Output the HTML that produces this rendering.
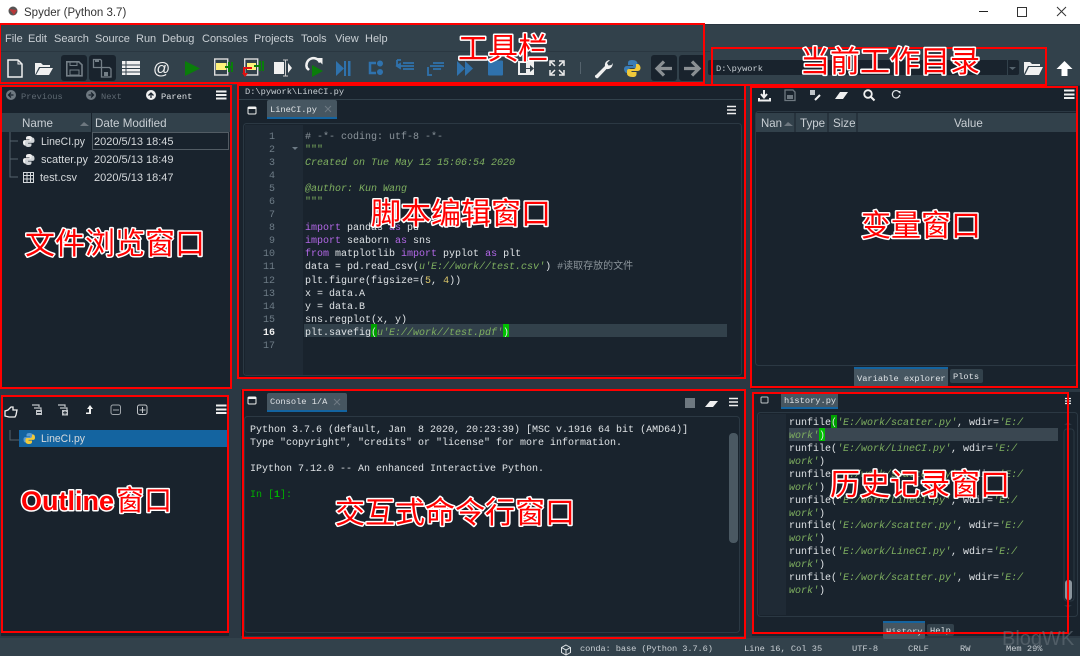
<!DOCTYPE html>
<html><head><meta charset="utf-8"><title>Spyder</title>
<style>
html,body{margin:0;padding:0;background:#19232D;width:1080px;height:656px;overflow:hidden}
svg{display:block;position:absolute;left:0;top:0}
text{white-space:pre}
.ui{font-family:"Liberation Sans",sans-serif;font-size:11px;fill:#c9cfd4}
.hd{font-size:11.6px}
.mn{font-family:"Liberation Mono","Noto Sans CJK SC",monospace;font-size:10px;fill:#dfe3e6}
.sm{font-family:"Liberation Mono","Noto Sans CJK SC",monospace;font-size:8.7px;fill:#c9cfd4}
.ln{font-family:"Liberation Mono",monospace;font-size:10px;fill:#6d7b86;text-anchor:end}
.kw{fill:#b267e6}.st{fill:#7fb060;font-style:italic}.cm{fill:#8b949b}.nu{fill:#dcc66a}
.lb{font-family:"Liberation Sans","Noto Sans CJK SC",sans-serif;font-size:30px;font-weight:400;fill:#f00;stroke:#fff;stroke-width:3px;paint-order:stroke;stroke-linejoin:round}
.box{fill:none;stroke:#f00;stroke-width:2}
.bl{fill:#2f72ad}
</style></head><body>
<svg width="1080" height="656" viewBox="0 0 1080 656" xmlns="http://www.w3.org/2000/svg">
<!-- title bar -->
<rect width="1080" height="25" fill="#fff"/>
<rect y="24" width="1080" height="1" fill="#2a3540"/>
<circle cx="13" cy="11" r="4.5" fill="#555"/><path d="M9 9l8 1-3 5z" fill="#b8383a"/>
<text x="24" y="16" font-family="Liberation Sans" font-size="11.5" fill="#333">Spyder (Python 3.7)</text>
<rect x="979" y="11" width="9" height="1" fill="#222"/>
<rect x="1017.500" y="7.500" width="9" height="9" fill="none" stroke="#333"/>
<path d="M1057 7l9 9M1066 7l-9 9" stroke="#333" stroke-width="1" fill="none"/>
<!-- menu + toolbar -->
<rect y="25" width="1080" height="60" fill="#32414B"/>
<rect y="51" width="710" height="1" fill="#2a3741"/>
<g class="ui">
<text x="5" y="42">File</text><text x="28" y="42">Edit</text><text x="54" y="42">Search</text><text x="95" y="42">Source</text><text x="136" y="42">Run</text><text x="162" y="42">Debug</text><text x="202" y="42">Consoles</text><text x="254" y="42">Projects</text><text x="301" y="42">Tools</text><text x="335" y="42">View</text><text x="365" y="42">Help</text>
</g>
<!-- toolbar icons -->
<path d="M8 60h10l4 4v13H8z" fill="none" stroke="#f0f0f0" stroke-width="1.500"/><path d="M18 60v4h4" fill="none" stroke="#f0f0f0"/>
<path d="M35 63h6l2 2h7v2H39l-4 8zM36 75l4-7h13l-4 7z" fill="#f0f0f0"/>
<rect x="61" y="55" width="26" height="26" rx="3" fill="#19232D"/><rect x="89" y="55" width="27" height="26" rx="3" fill="#19232D"/>
<path d="M66.800 61.800h12l3.200 3v11h-15.200z" fill="none" stroke="#747f87" stroke-width="1.600"/><rect x="70" y="62" width="7" height="3.500" fill="none" stroke="#747f87"/><rect x="70" y="70" width="9" height="5" fill="none" stroke="#747f87"/>
<path d="M93.500 59.500h7l1 1v7h-8zM101.500 67.500h8l1.500 1.500v8h-9.500z" fill="none" stroke="#747f87" stroke-width="1.300"/><rect x="95" y="60" width="4" height="2" fill="#747f87"/><rect x="104" y="72" width="4" height="4" fill="#747f87"/>
<path d="M122 61h18v14h-18z" fill="#f0f0f0"/><path d="M122 65h18M122 68.500h18M122 72h18M126 61v14" stroke="#32414B" stroke-width="1"/>
<text x="153" y="74" font-family="Liberation Sans" font-size="17" fill="#f0f0f0">@</text>
<path d="M185 61l15 7.500-15 7.500z" fill="#0a7d0a"/>
<rect x="214.700" y="59" width="13" height="16" fill="#32414B" stroke="#ddd" stroke-width="1.400"/><rect x="216" y="63" width="10.500" height="7" fill="#fff27a"/><path d="M225 67h7M229 62v10M232 62v10" stroke="#0a7d0a" stroke-width="2" fill="none"/>
<rect x="244.700" y="59" width="13" height="16" fill="#32414B" stroke="#ddd" stroke-width="1.400"/><rect x="247" y="63" width="9" height="7" fill="#fff27a"/><path d="M254 66h6M260 61v10M263 61v10" stroke="#0a7d0a" stroke-width="2" fill="none"/><path d="M252 68h-8v6" stroke="#e01010" stroke-width="2" fill="none"/><path d="M242 73h6l-3 4z" fill="#e01010"/>
<rect x="274" y="62" width="10" height="12" fill="#f0f0f0"/><path d="M283 60h5M283 76h5M285.500 60v16" stroke="#ccc" fill="none"/><path d="M288 63l4 5-4 5z" fill="#f0f0f0"/>
<path d="M320 62.500a7 7 0 1 0-13 5.500l2 2" fill="none" stroke="#f0f0f0" stroke-width="2.500"/><path d="M316 58h6.500v6.500z" fill="#f0f0f0"/><path d="M312 65l11 6-11 6z" fill="#0a7d0a"/>
<path class="bl" d="M336 61l8 7.500-8 7.500zM344 61h2v15h-2zM348 61h2.500v15H348z"/>
<path d="M376 63h-6v10h6" fill="none" stroke="#2f72ad" stroke-width="2.500"/><circle class="bl" cx="380" cy="63.500" r="3"/><circle class="bl" cx="380" cy="72" r="3"/>
<path d="M397 60h4M397 60v6M400 66h14M403 63h11M403 69h11M397 66l3-2v4z" stroke="#2f72ad" stroke-width="1.800" fill="none"/>
<path d="M430 66h14M433 63h11M433 69h8M428 67v8h4" stroke="#2f72ad" stroke-width="1.800" fill="none"/>
<path class="bl" d="M457 61l8 7.500-8 7.500zM465 61l8 7.500-8 7.500z"/>
<rect class="bl" x="488" y="60.500" width="15" height="15" rx="1"/>
<rect x="518" y="61" width="16" height="14" fill="#eee"/><path d="M520 63h6v10h-6z" fill="#32414B"/><path d="M526 68h4v-3l4 3.500-4 3.500v-3h-4z" fill="#32414B"/>
<path d="M550 66v-5h5M559 61h5v5M550 70v5h5M559 75h5v-5M551 62l4 4M563 62l-4 4M551 74l4-4M563 74l-4-4" fill="none" stroke="#eee" stroke-width="1.500"/>
<rect x="580" y="62" width="1" height="12" fill="#55636d"/>
<path d="M596 75l9-9a5 5 0 0 1 5-6l-3 3 1.500 2.500 3-.5 1-2a5 5 0 0 1-6 6l-8 8.500a1.800 1.800 0 0 1-3-2.500z" fill="#f0f0f0"/>
<path d="M632 60c-4 0-4 2-4 3.500V65h5v1h-6c-2 0-3 1.500-3 3s1 4 3 4h1.500v-2c0-2 1-3 3-3h4c1.500 0 2-1 2-2v-2.500c0-2-2-3.500-5.500-3.500z" fill="#3a7cb5"/>
<path d="M632.500 77c4 0 4-2 4-3.500V72h-5v-1h6c2 0 3-1.500 3-3s-1-4-3-4h-1.500v2c0 2-1 3-3 3h-4c-1.500 0-2 1-2 2v2.500c0 2 2 3.500 5.500 3.500z" fill="#f0c93a"/>
<rect x="651" y="55" width="26" height="26" rx="3" fill="#19232D"/><rect x="679" y="55" width="26" height="26" rx="3" fill="#19232D"/>
<path d="M672 68.500h-14M664 61.500l-7 7 7 7" fill="none" stroke="#8a8f93" stroke-width="3.200"/>
<path d="M684 68.500h14M692 61.500l7 7-7 7" fill="none" stroke="#8a8f93" stroke-width="3.200"/>
<!-- cwd -->
<rect x="708" y="60" width="311" height="15" rx="2" fill="#19232D"/>
<rect x="1007" y="60" width="1" height="15" fill="#32414B"/><path d="M1009 67h7l-3.500 3z" fill="#55636d"/>
<text class="sm" x="716" y="71">D:\pywork</text>
<path d="M1024 62h6l2 2h8v2h-12l-4 8zM1025 75l4-8h14l-4 8z" fill="#f0f0f0"/>
<path d="M1064.500 61l8 8h-5v7h-6v-7h-5z" fill="#fff"/>
<!-- splitter & panes -->
<rect x="0" y="85" width="1080" height="553" fill="#2b3843"/>
<rect x="1" y="86" width="231" height="303" fill="#19232D"/>
<rect x="1" y="396" width="228" height="240" fill="#19232D"/>
<rect x="239" y="86" width="507" height="293" fill="#19232D"/>
<rect x="241" y="390" width="505" height="246" fill="#19232D"/>
<rect x="751" y="86" width="329" height="303" fill="#19232D"/>
<rect x="752" y="392" width="328" height="244" fill="#19232D"/>
<!-- status bar -->
<rect y="638" width="1080" height="18" fill="#32414B"/>
<!-- file pane -->
<circle cx="11" cy="95" r="5" fill="#6e7880"/><path d="M13.500 95h-5M11 92.500L8.500 95l2.500 2.500" stroke="#19232D" stroke-width="1.300" fill="none"/>
<text class="sm" x="21" y="99" style="fill:#5f6a73">Previous</text>
<circle cx="91" cy="95" r="5" fill="#6e7880"/><path d="M88.500 95h5M91 92.500L93.500 95 91 97.500" stroke="#19232D" stroke-width="1.300" fill="none"/>
<text class="sm" x="101" y="99" style="fill:#5f6a73">Next</text>
<circle cx="151" cy="95" r="5" fill="#f0f0f0"/><path d="M151 98v-5M148.500 95.500L151 93l2.500 2.500" stroke="#19232D" stroke-width="1.300" fill="none"/>
<text class="sm" x="161" y="99" style="fill:#dfe3e6">Parent</text>
<path d="M216 91.500h10.500M216 95h10.500M216 98.500h10.500" stroke="#f0f0f0" stroke-width="2"/>
<rect x="2" y="113" width="228" height="19" fill="#32414B"/><rect x="91" y="113" width="1" height="19" fill="#19232D"/>
<text class="ui hd" x="22" y="127">Name</text><path d="M80 126l4-4 5 4z" fill="#6e7880"/>
<text class="ui hd" x="95" y="127">Date Modified</text>
<path d="M10 132v45h8M10 141h8M10 159h8" stroke="#55636d" fill="none"/>
<rect x="92.500" y="132.500" width="136" height="17" fill="none" stroke="#8a949c" stroke-dasharray="1 1"/>
<g id="py1"><path d="M29 136c-3 0-3 1.500-3 2.500v1h3.500v.6H25c-1.500 0-2 1-2 2.400s.5 3 2 3h1v-1.500c0-1.500 1-2 2-2h3c1 0 1.500-.6 1.500-1.500v-2c0-1.500-1.500-2.500-3.500-2.500z" fill="#f0f0f0"/><path d="M28.500 147c3 0 3-1.500 3-2.500v-1H28v-.6h4.500c1.500 0 2-1 2-2.400s-.5-3-2-3h-1v1.500c0 1.500-1 2-2 2h-3c-1 0-1.500.6-1.500 1.500v2c0 1.500 1.500 2.500 3.500 2.500z" fill="#d0d4d8"/></g>
<path d="M29 154c-3 0-3 1.500-3 2.500v1h3.500v.6H25c-1.500 0-2 1-2 2.400s.5 3 2 3h1v-1.500c0-1.500 1-2 2-2h3c1 0 1.500-.6 1.500-1.500v-2c0-1.500-1.500-2.500-3.500-2.500z" fill="#f0f0f0"/><path d="M28.500 165c3 0 3-1.500 3-2.500v-1H28v-.6h4.500c1.500 0 2-1 2-2.400s-.5-3-2-3h-1v1.500c0 1.500-1 2-2 2h-3c-1 0-1.500.6-1.500 1.500v2c0 1.500 1.500 2.500 3.500 2.500z" fill="#d0d4d8"/>
<path d="M23.500 172.500h10v10h-10zM23.500 175.500h10M23.500 179h10M27 172.500v10M30.500 172.500v10" stroke="#d5d9dc" fill="none"/>
<g class="ui" style="fill:#d5d9dc">
<text x="41" y="145" textLength="44" lengthAdjust="spacingAndGlyphs">LineCI.py</text><text x="94" y="145">2020/5/13 18:45</text>
<text x="41" y="163" textLength="47" lengthAdjust="spacingAndGlyphs">scatter.py</text><text x="94" y="163">2020/5/13 18:49</text>
<text x="40" y="181" textLength="37" lengthAdjust="spacingAndGlyphs">test.csv</text><text x="94" y="181">2020/5/13 18:47</text>
</g>
<!-- outline pane -->
<path d="M5 411l3-1 3-3 2 0 0 3h4l-1 5-1 2h-6l-4-1z" fill="none" stroke="#f0f0f0" stroke-width="1.300"/>
<path d="M32 405h7v2M34 408h7v2" fill="none" stroke="#c0c4c8" stroke-width="1.200"/><rect x="36" y="410" width="6" height="5" fill="#c0c4c8"/><path d="M37 412.500h4" stroke="#19232D"/>
<path d="M58 405h7v2M60 408h7v2" fill="none" stroke="#c0c4c8" stroke-width="1.200"/><rect x="62" y="410" width="6" height="5.500" fill="#c0c4c8"/><path d="M63 412.800h4M65 411v3.500" stroke="#19232D"/>
<path d="M90 405l3 4h-2v5h-5v-1.500h3v-3.500h-2z" fill="#f0f0f0"/>
<rect x="111" y="405" width="9.500" height="9.500" rx="2" fill="none" stroke="#a0a6ab"/><path d="M113 410h6" stroke="#a0a6ab"/>
<rect x="137.500" y="405" width="9.500" height="9.500" rx="2" fill="none" stroke="#c0c4c8"/><path d="M139.500 410h6M142.500 407v6" stroke="#c0c4c8"/>
<path d="M216 405.500h10.500M216 409.500h10.500M216 413h10.500" stroke="#f0f0f0" stroke-width="2"/>
<path d="M10 430v10h9" stroke="#55636d" fill="none"/>
<rect x="19" y="430" width="210" height="17" fill="#1464A0"/>
<path d="M29.500 433c-3 0-3 1.500-3 2.500v1H30v.6h-4.500c-1.500 0-2 1-2 2.400s.5 3 2 3h1V441c0-1.500 1-2 2-2h3c1 0 1.500-.6 1.500-1.500v-2c0-1.500-1.500-2.500-3.500-2.500z" fill="#5a9ad0"/><path d="M29 444c3 0 3-1.500 3-2.500v-1h-3.500v-.6H33c1.500 0 2-1 2-2.400s-.5-3-2-3h-1v1.500c0 1.500-1 2-2 2h-3c-1 0-1.500.6-1.500 1.500v2c0 1.500 1.500 2.500 3.500 2.500z" fill="#f0c93a"/>
<text class="ui" x="41" y="442" style="fill:#d5d9dc" textLength="44" lengthAdjust="spacingAndGlyphs">LineCI.py</text>
<!-- editor pane -->
<text class="sm" x="245" y="94">D:\pywork\LineCI.py</text>
<rect x="239" y="99" width="507" height="1" fill="#32414B"/>
<rect x="248" y="107" width="8" height="7" rx="1" fill="none" stroke="#f0f0f0"/><rect x="248" y="107" width="8" height="2" fill="#f0f0f0"/>
<rect x="267" y="100" width="70" height="19" fill="#465661" rx="2"/><rect x="267" y="117" width="70" height="2" fill="#1464A0"/>
<text class="sm" x="270" y="112" style="fill:#dfe3e6">LineCI.py</text><path d="M325 106l6 6M331 106l-6 6" stroke="#6e7a83"/>
<path d="M727 106.500h9M727 110h9M727 113.500h9" stroke="#f0f0f0" stroke-width="1.500"/>
<rect x="243.500" y="123.500" width="498" height="252" rx="3" fill="#19232D" stroke="#2b3843"/>
<rect x="245" y="125" width="58" height="250" fill="#1f2a35"/>
<g class="ln">
<text x="275" y="139">1</text><text x="275" y="152">2</text><text x="275" y="165">3</text><text x="275" y="178">4</text><text x="275" y="191">5</text><text x="275" y="204">6</text><text x="275" y="217">7</text><text x="275" y="230">8</text><text x="275" y="243">9</text><text x="275" y="256">10</text><text x="275" y="269">11</text><text x="275" y="283">12</text><text x="275" y="296">13</text><text x="275" y="309">14</text><text x="275" y="322">15</text><text x="275" y="335" font-weight="bold" style="fill:#f0f0f0">16</text><text x="275" y="348">17</text>
</g>
<path d="M292 147h6l-3 3z" fill="#6d7b86"/>
<rect x="304" y="324" width="423" height="13" fill="#32414B"/>
<rect x="371" y="324" width="6" height="13" fill="#00a000"/><rect x="503" y="324" width="6" height="13" fill="#00c000"/>
<g class="mn">
<text x="305" y="139" class="cm"># -*- coding: utf-8 -*-</text>
<text x="305" y="152" class="st" style="font-style:normal">"""</text>
<text x="305" y="165" class="st">Created on Tue May 12 15:06:54 2020</text>
<text x="305" y="191" class="st">@author: Kun Wang</text>
<text x="305" y="204" class="st" style="font-style:normal">"""</text>
<text x="305" y="230"><tspan class="kw">import</tspan> pandas <tspan class="kw">as</tspan> pd</text>
<text x="305" y="243"><tspan class="kw">import</tspan> seaborn <tspan class="kw">as</tspan> sns</text>
<text x="305" y="256"><tspan class="kw">from</tspan> matplotlib <tspan class="kw">import</tspan> pyplot <tspan class="kw">as</tspan> plt</text>
<text x="305" y="269">data = pd.read_csv(<tspan class="st">u'E://work//test.csv'</tspan>) <tspan class="cm">#读取存放的文件</tspan></text>
<text x="305" y="283">plt.figure(figsize=(<tspan class="nu">5</tspan>, <tspan class="nu">4</tspan>))</text>
<text x="305" y="296">x = data.A</text>
<text x="305" y="309">y = data.B</text>
<text x="305" y="322">sns.regplot(x, y)</text>
<text x="305" y="335">plt.savefig(<tspan class="st">u'E://work//test.pdf'</tspan>)</text>
</g>
<!-- console pane -->
<rect x="248" y="397" width="8" height="7" rx="1" fill="none" stroke="#f0f0f0"/><rect x="248" y="397" width="8" height="2" fill="#f0f0f0"/>
<rect x="267" y="393" width="80" height="19" fill="#465661" rx="2"/><rect x="267" y="410" width="80" height="2" fill="#1464A0"/>
<text class="sm" x="270" y="404" style="fill:#dfe3e6">Console 1/A</text><path d="M334 399l6 6M340 399l-6 6" stroke="#6e7a83"/>
<rect x="685" y="398" width="10" height="10" fill="#6e7880"/>
<path d="M705 407l5-6h8l-5 6z" fill="#f0f0f0"/>
<path d="M729 398.500h9M729 402h9M729 405.500h9" stroke="#f0f0f0" stroke-width="1.500"/>
<rect x="244.500" y="416.500" width="495" height="216" rx="3" fill="#19232D" stroke="#2b3843"/>
<rect x="729" y="433" width="9" height="110" rx="4" fill="#4a5862"/>
<g class="mn">
<text x="250" y="432">Python 3.7.6 (default, Jan  8 2020, 20:23:39) [MSC v.1916 64 bit (AMD64)]</text>
<text x="250" y="445">Type "copyright", "credits" or "license" for more information.</text>
<text x="250" y="471">IPython 7.12.0 -- An enhanced Interactive Python.</text>
<text x="250" y="497" style="fill:#00b000">In [<tspan font-weight="bold">1</tspan>]:</text>
</g>
<!-- variable explorer -->
<path d="M764 90v6M761 94l3 3.500 3-3.500M759 98v2.500h11V98" fill="none" stroke="#f0f0f0" stroke-width="2"/>
<path d="M785 90h8l2 2v8.500h-10z" fill="none" stroke="#6e7880" stroke-width="1.300"/><rect x="787" y="95" width="6" height="4" fill="#6e7880"/>
<path d="M810 90h5v5h-5z" fill="#c0c4c8"/><path d="M815 100l5-5" stroke="#f0f0f0" stroke-width="2"/>
<path d="M835 99l5-7h8l-5 7z" fill="#f0f0f0"/>
<circle cx="868" cy="94" r="3.800" fill="none" stroke="#f0f0f0" stroke-width="1.800"/><path d="M871 97l3.500 3.500" stroke="#f0f0f0" stroke-width="2"/>
<path d="M899 92a3.700 3.700 0 1 0 0.700 3" fill="none" stroke="#dfe3e6" stroke-width="1.200"/><path d="M897 91h3.500v3z" fill="#dfe3e6"/>
<path d="M1064 90.500h10.500M1064 94.500h10.500M1064 98h10.500" stroke="#f0f0f0" stroke-width="2"/>
<rect x="755.500" y="111.500" width="322" height="254" rx="3" fill="#19232D" stroke="#2b3843"/>
<rect x="756" y="113" width="322" height="19" fill="#32414B"/>
<path d="M795 113v19M828 113v19M857 113v19" stroke="#19232D"/>
<g class="ui hd">
<text x="761" y="127" textLength="21" lengthAdjust="spacingAndGlyphs">Nan</text><path d="M784 126l4-4 5 4z" fill="#6e7880"/>
<text x="800" y="127">Type</text><text x="833" y="127">Size</text><text x="954" y="127">Value</text>
</g>
<rect x="854" y="367" width="94" height="20" rx="2" fill="#465661"/><rect x="854" y="367" width="94" height="2" fill="#1464A0"/>
<text class="sm" x="857" y="381" style="fill:#dfe3e6">Variable explorer</text>
<rect x="950" y="369" width="33" height="14" rx="2" fill="#32414B"/><text class="sm" x="953" y="379" style="fill:#dfe3e6">Plots</text>
<!-- history -->
<rect x="761" y="397" width="7" height="6" rx="1" fill="none" stroke="#c0c4c8"/>
<rect x="781" y="393" width="57" height="16" fill="#465661"/><rect x="781" y="407" width="57" height="2" fill="#1464A0"/>
<text class="sm" x="784" y="403" style="fill:#dfe3e6">history.py</text>
<path d="M1065 398.500h6M1065 401h6M1065 403.500h6" stroke="#f0f0f0" stroke-width="1.200"/>
<rect x="757.500" y="412.500" width="320" height="204" rx="3" fill="#19232D" stroke="#2b3843"/>
<rect x="759" y="414" width="27" height="201" fill="#1f2a35"/>
<rect x="789" y="428" width="269" height="13" fill="#3a4751"/>
<rect x="831" y="415" width="6" height="13" fill="#00a000"/><rect x="819" y="428" width="6" height="13" fill="#00c000"/>
<rect x="1064" y="429" width="10" height="172" rx="3" fill="#19232D" stroke="#2b3843"/>
<rect x="1065" y="580" width="7" height="20" rx="3" fill="#8a949c"/>
<path d="M1064 425l4-3 4 3z" fill="#2b3843"/><path d="M1064 605l4 3 4-3z" fill="#2b3843"/>
<g class="mn">
<text x="789" y="425">runfile(<tspan class="st">'E:/work/scatter.py'</tspan>, wdir=<tspan class="st">'E:/</tspan></text>
<text x="789" y="438"><tspan class="st">work'</tspan>)</text>
<text x="789" y="451">runfile(<tspan class="st">'E:/work/LineCI.py'</tspan>, wdir=<tspan class="st">'E:/</tspan></text>
<text x="789" y="464"><tspan class="st">work'</tspan>)</text>
<text x="789" y="477">runfile(<tspan class="st">'E:/work/scatter.py'</tspan>, wdir=<tspan class="st">'E:/</tspan></text>
<text x="789" y="490"><tspan class="st">work'</tspan>)</text>
<text x="789" y="503">runfile(<tspan class="st">'E:/work/LineCI.py'</tspan>, wdir=<tspan class="st">'E:/</tspan></text>
<text x="789" y="516"><tspan class="st">work'</tspan>)</text>
<text x="789" y="528">runfile(<tspan class="st">'E:/work/scatter.py'</tspan>, wdir=<tspan class="st">'E:/</tspan></text>
<text x="789" y="541"><tspan class="st">work'</tspan>)</text>
<text x="789" y="554">runfile(<tspan class="st">'E:/work/LineCI.py'</tspan>, wdir=<tspan class="st">'E:/</tspan></text>
<text x="789" y="567"><tspan class="st">work'</tspan>)</text>
<text x="789" y="580">runfile(<tspan class="st">'E:/work/scatter.py'</tspan>, wdir=<tspan class="st">'E:/</tspan></text>
<text x="789" y="593"><tspan class="st">work'</tspan>)</text>
</g>
<rect x="883" y="621" width="42" height="18" rx="2" fill="#465661"/><rect x="883" y="621" width="42" height="2" fill="#1464A0"/>
<text class="sm" x="886" y="634" style="fill:#dfe3e6">History</text>
<rect x="927" y="624" width="27" height="12" rx="2" fill="#32414B"/><text class="sm" x="930" y="633" style="fill:#dfe3e6">Help</text>
<!-- status -->
<path d="M566 645l4.500 2.500v5l-4.500 2.500-4.500-2.500v-5zM561.500 647.500l4.500 2.500 4.500-2.500M566 650v5" fill="none" stroke="#dfe3e6"/>
<g class="sm">
<text x="580" y="651" textLength="133">conda: base (Python 3.7.6)</text>
<text x="744" y="651">Line 16, Col 35</text>
<text x="852" y="651">UTF-8</text>
<text x="908" y="651">CRLF</text>
<text x="960" y="651">RW</text>
<text x="1006" y="651">Mem 29%</text>
</g>
<!-- red annotation boxes -->
<rect class="box" x="0" y="24" width="704" height="59"/>
<rect class="box" x="712" y="48" width="334" height="37"/>
<rect class="box" x="1" y="86" width="230" height="302"/>
<rect class="box" x="238" y="85" width="507" height="293"/>
<rect class="box" x="243" y="390" width="502" height="248"/>
<rect class="box" x="751" y="87" width="326" height="300"/>
<rect class="box" x="753" y="393" width="315" height="240"/>
<rect class="box" x="2" y="396" width="226" height="236"/>
<text x="1002" y="645" font-family="Liberation Sans" font-size="20" fill="#6a757e" fill-opacity=".55">BlogWK</text>
<!-- annotation labels -->
<g class="lb">
<text x="458" y="59">工具栏</text>
<text x="800" y="72">当前工作目录</text>
<text x="371" y="224">脚本编辑窗口</text>
<text x="25" y="254">文件浏览窗口</text>
<text x="861" y="236">变量窗口</text>
<text x="21" y="510"><tspan font-size="27" font-weight="700">Outline</tspan><tspan dx="2" font-size="28">窗口</tspan></text>
<text x="335" y="523">交互式命令行窗口</text>
<text x="830" y="495">历史记录窗口</text>
</g>
</svg>
</body></html>
